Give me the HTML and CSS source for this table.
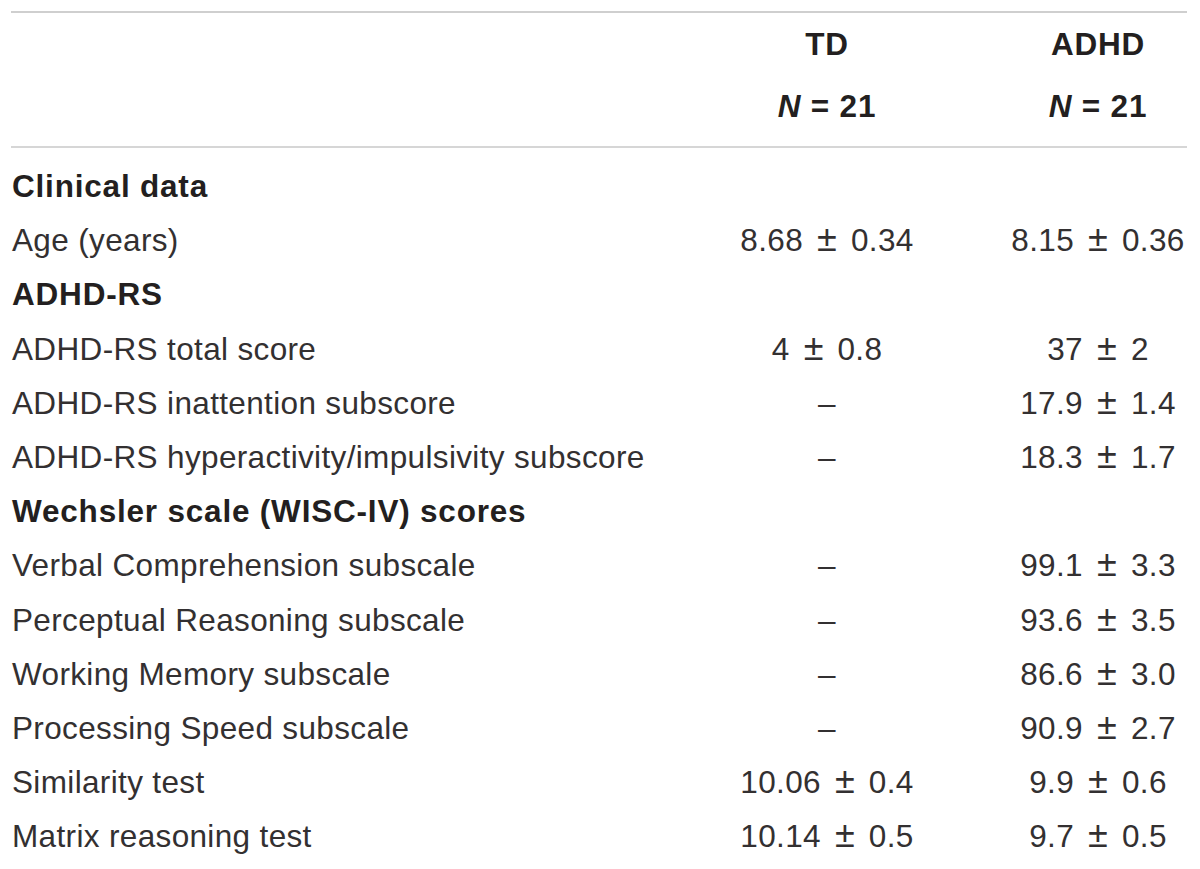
FILE: index.html
```html
<!DOCTYPE html>
<html lang="en">
<head>
<meta charset="utf-8">
<title>Table</title>
<link rel="stylesheet" href="styles.css">
</head>
<body>
<table class="data">
  <colgroup>
    <col class="c-label">
    <col class="c-td">
    <col class="c-adhd">
  </colgroup>
  <thead>
    <tr class="h1"><th></th><th>TD</th><th>ADHD</th></tr>
    <tr class="h2"><th></th><th><i>N</i> = 21</th><th><i>N</i> = 21</th></tr>
  </thead>
  <tbody>
    <tr class="first sec"><td>Clinical data</td><td></td><td></td></tr>
    <tr><td>Age (years)</td><td>8.68 <span class="pm">±</span> 0.34</td><td>8.15 <span class="pm">±</span> 0.36</td></tr>
    <tr class="sec"><td>ADHD-RS</td><td></td><td></td></tr>
    <tr><td>ADHD-RS total score</td><td>4 <span class="pm">±</span> 0.8</td><td>37 <span class="pm">±</span> 2</td></tr>
    <tr><td>ADHD-RS inattention subscore</td><td>–</td><td>17.9 <span class="pm">±</span> 1.4</td></tr>
    <tr><td>ADHD-RS hyperactivity/impulsivity subscore</td><td>–</td><td>18.3 <span class="pm">±</span> 1.7</td></tr>
    <tr class="sec"><td>Wechsler scale (WISC-IV) scores</td><td></td><td></td></tr>
    <tr><td>Verbal Comprehension subscale</td><td>–</td><td>99.1 <span class="pm">±</span> 3.3</td></tr>
    <tr><td>Perceptual Reasoning subscale</td><td>–</td><td>93.6 <span class="pm">±</span> 3.5</td></tr>
    <tr><td>Working Memory subscale</td><td>–</td><td>86.6 <span class="pm">±</span> 3.0</td></tr>
    <tr><td>Processing Speed subscale</td><td>–</td><td>90.9 <span class="pm">±</span> 2.7</td></tr>
    <tr><td>Similarity test</td><td>10.06 <span class="pm">±</span> 0.4</td><td>9.9 <span class="pm">±</span> 0.6</td></tr>
    <tr><td>Matrix reasoning test</td><td>10.14 <span class="pm">±</span> 0.5</td><td>9.7 <span class="pm">±</span> 0.5</td></tr>
  </tbody>
</table>
</body>
</html>
```

FILE: styles.css
```css
html, body {
  margin: 0;
  padding: 0;
  background: #ffffff;
}

.data {
  margin: 11px 0 0 11px;
  width: 1176px;
  border-collapse: collapse;
  table-layout: fixed;
  font-family: "Liberation Sans", Arial, sans-serif;
  font-size: 31.5px;
  letter-spacing: 0.35px;
  color: #333031;
}

.c-label { width: 634px; }
.c-td { width: 364px; }
.c-adhd { width: 178px; }

.data th,
.data td {
  padding: 0;
  line-height: 54.2px;
  white-space: nowrap;
  vertical-align: top;
}

.data td:first-child {
  text-align: left;
  padding-left: 1px;
}

.data td + td,
.data th + th {
  text-align: center;
}

.data td + td {
  word-spacing: 5px;
}

.data .pm {
  font-size: 36px;
  line-height: 0;
  letter-spacing: 0;
  font-weight: normal;
}

.data thead {
  border-top: 2px solid #cfcfcf;
  border-bottom: 2px solid #d6d6d6;
}

.data thead th {
  font-weight: bold;
  color: #231f20;
  line-height: 54px;
  letter-spacing: 0.8px;
}

.data thead th i {
  font-style: italic;
}

.data .h1 th {
  padding-top: 4px;
  padding-bottom: 4px;
}

.data .h2 th {
  padding-top: 4px;
  padding-bottom: 13px;
}

.data .first td {
  padding-top: 11px;
}

.data .sec td {
  font-weight: bold;
  color: #231f20;
  letter-spacing: 0.8px;
}
```
